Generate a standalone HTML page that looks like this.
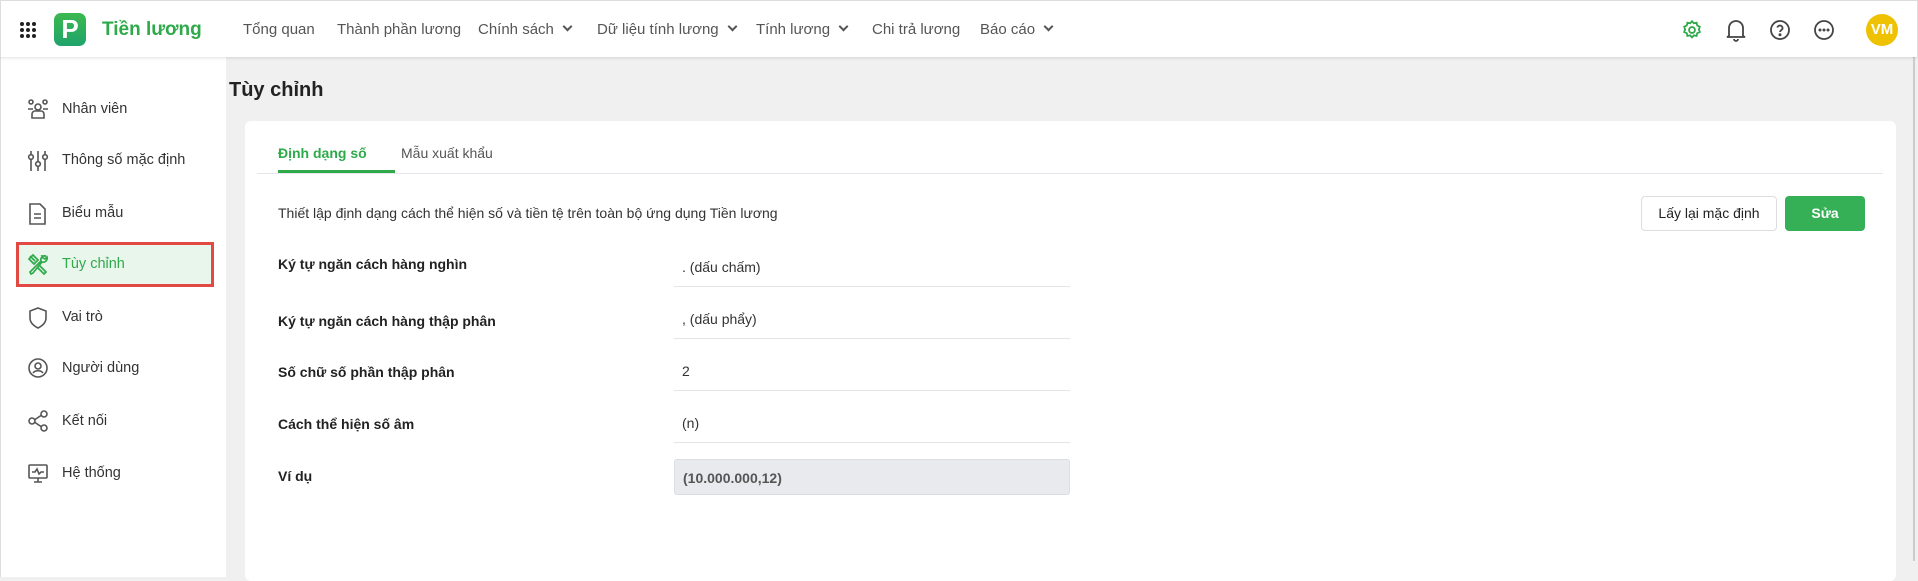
<!DOCTYPE html>
<html><head><meta charset="utf-8"><style>
*{box-sizing:border-box;margin:0;padding:0}
body{width:1918px;height:561px;overflow:hidden;background:#f0f0f0;font-family:"Liberation Sans",Arial,sans-serif;position:relative;color:#222}
.hdr{position:absolute;left:0;top:0;width:1918px;height:57px;background:#fff;box-shadow:0 1px 3px rgba(0,0,0,.12);border:1px solid #ddd;border-bottom:none;z-index:2}
.nav{position:absolute;top:20px;font-size:15px;color:#555}
.side{position:absolute;left:0;top:57px;width:226px;height:520px;background:#fff;border-left:1px solid #ddd}
.si{position:absolute;left:0;width:226px;height:30px;font-size:14.5px;color:#333}
.si span{position:absolute;left:61px;top:6px}
.si svg{position:absolute;left:26px;top:3px}
.card{position:absolute;left:245px;top:121px;width:1651px;height:460px;background:#fff;border-radius:6px}
.lbl{position:absolute;left:33px;font-size:14px;font-weight:bold;color:#222}
.val{position:absolute;left:429px;width:396px;height:40px;border-bottom:1px solid #e3e3e8;font-size:14px;color:#333;padding:12px 8px}
.chev{display:inline-block;width:7px;height:7px;border-right:2px solid #555;border-bottom:2px solid #555;transform:rotate(45deg);margin-left:10px;position:relative;top:-4px}
</style></head><body>
<div class="hdr">
  <svg style="position:absolute;left:19px;top:21px" width="16" height="16" viewBox="0 0 16 16" fill="#222"><circle cx="2" cy="2" r="2"/><circle cx="8" cy="2" r="2"/><circle cx="14" cy="2" r="2"/><circle cx="2" cy="8" r="2"/><circle cx="8" cy="8" r="2"/><circle cx="14" cy="8" r="2"/><circle cx="2" cy="14" r="2"/><circle cx="8" cy="14" r="2"/><circle cx="14" cy="14" r="2"/></svg>
  <div style="position:absolute;left:53px;top:12px;width:32px;height:33px;border-radius:7px;background:linear-gradient(#3cb94f,#1fa36b);color:#fff;font-weight:bold;font-size:26px;text-align:center;line-height:33px">P</div>
  <div style="position:absolute;left:101px;top:18px;font-size:19px;font-weight:bold;color:#2faa4a">Tiền lương</div>
  <div class="nav" style="left:242px">Tổng quan</div>
  <div class="nav" style="left:336px">Thành phần lương</div>
  <div class="nav" style="left:477px">Chính sách<i class="chev"></i></div>
  <div class="nav" style="left:596px">Dữ liệu tính lương<i class="chev"></i></div>
  <div class="nav" style="left:755px">Tính lương<i class="chev"></i></div>
  <div class="nav" style="left:871px">Chi trả lương</div>
  <div class="nav" style="left:979px">Báo cáo<i class="chev"></i></div>
  <svg style="position:absolute;left:1680px;top:18px" width="22" height="22" viewBox="0 0 24 24" fill="none" stroke="#2faa4a" stroke-width="2"><circle cx="12" cy="12" r="3.2"/><path d="M12 2.5l2 2.2 3-.6.7 3 2.8 1.3-1 2.9 1 2.9-2.8 1.3-.7 3-3-.6-2 2.2-2-2.2-3 .6-.7-3-2.8-1.3 1-2.9-1-2.9 2.8-1.3.7-3 3 .6z"/></svg>
  <svg style="position:absolute;left:1724px;top:17px" width="22" height="24" viewBox="0 0 22 24" fill="none" stroke="#444" stroke-width="1.8"><path d="M4 18V10a7 7 0 0114 0v8l2 1H2z"/><path d="M9 21a2 2 0 004 0"/></svg>
  <svg style="position:absolute;left:1768px;top:18px" width="22" height="22" viewBox="0 0 22 22" fill="none" stroke="#444" stroke-width="1.8"><circle cx="11" cy="11" r="9"/><path d="M8.3 8.5a2.7 2.7 0 015.3.7c0 1.8-2.6 2-2.6 3.8"/><circle cx="11" cy="15.8" r=".6" fill="#444"/></svg>
  <svg style="position:absolute;left:1812px;top:18px" width="22" height="22" viewBox="0 0 22 22" fill="none" stroke="#444" stroke-width="1.8"><circle cx="11" cy="11" r="9"/><circle cx="7" cy="11" r=".6" fill="#444"/><circle cx="11" cy="11" r=".6" fill="#444"/><circle cx="15" cy="11" r=".6" fill="#444"/></svg>
  <div style="position:absolute;left:1865px;top:13px;width:32px;height:32px;border-radius:50%;background:#eec200;color:#fff;font-weight:bold;font-size:15px;text-align:center;line-height:32px">VM</div>
</div>
<div class="side">
  <div class="si" style="top:38px"><svg width="22" height="22" viewBox="0 0 22 22" fill="none" stroke="#555" stroke-width="1.6"><circle cx="4" cy="4" r="2"/><circle cx="18" cy="4" r="2"/><circle cx="11" cy="9" r="3"/><path d="M1 11h5M16 11h5M5 20v-4a3 3 0 013-3h6a3 3 0 013 3v4z"/></svg><span>Nhân viên</span></div>
  <div class="si" style="top:89px"><svg width="22" height="24" viewBox="0 0 22 24" fill="none" stroke="#555" stroke-width="1.6"><path d="M4 2v20M11 2v20M18 2v20"/><circle cx="4" cy="8" r="2.3" fill="#fff"/><circle cx="11" cy="15" r="2.3" fill="#fff"/><circle cx="18" cy="8" r="2.3" fill="#fff"/></svg><span>Thông số mặc định</span></div>
  <div class="si" style="top:142px"><svg width="20" height="24" viewBox="0 0 20 24" fill="none" stroke="#555" stroke-width="1.6"><path d="M3 2h10l5 5v15H3z"/><path d="M7 12h7M7 16h7"/></svg><span>Biểu mẫu</span></div>
  <div style="position:absolute;left:15px;top:185px;width:198px;height:45px;background:#e9f6ec;border:3px solid #e04a43"></div>
  <div class="si" style="top:193px;color:#2faa4a"><svg width="22" height="22" viewBox="0 0 22 22" fill="none" stroke="#2faa4a" stroke-width="1.7"><path d="M3 3l5 5M2 6l4-4 5 5-4 4zM12 12l7 7-2 2-7-7"/><path d="M19 3a4 4 0 00-5 5L3 19l1 2 2-1L15 9a4 4 0 005-5l-2 2-2-1-1-2z"/></svg><span>Tùy chỉnh</span></div>
  <div class="si" style="top:246px"><svg width="22" height="24" viewBox="0 0 22 24" fill="none" stroke="#555" stroke-width="1.6"><path d="M11 2l8 3v7c0 5-4 8-8 10-4-2-8-5-8-10V5z"/></svg><span>Vai trò</span></div>
  <div class="si" style="top:297px"><svg width="22" height="22" viewBox="0 0 22 22" fill="none" stroke="#555" stroke-width="1.6"><circle cx="11" cy="11" r="9"/><circle cx="11" cy="9" r="3"/><path d="M6 16c2-3 8-3 10 0"/></svg><span>Người dùng</span></div>
  <div class="si" style="top:350px"><svg width="22" height="22" viewBox="0 0 22 22" fill="none" stroke="#555" stroke-width="1.6"><circle cx="5" cy="11" r="3"/><circle cx="17" cy="4" r="3"/><circle cx="17" cy="18" r="3"/><path d="M8 9.5l6-4M8 12.5l6 4"/></svg><span>Kết nối</span></div>
  <div class="si" style="top:402px"><svg width="22" height="22" viewBox="0 0 22 22" fill="none" stroke="#555" stroke-width="1.6"><rect x="2" y="3" width="18" height="13" rx="1"/><path d="M5 10h3l2-3 2 5 2-2h3M7 20h8M11 16v4"/></svg><span>Hệ thống</span></div>
</div>
<div style="position:absolute;left:229px;top:79px;font-size:20px;font-weight:bold;color:#222">Tùy chỉnh</div>
<div class="card">
  <div style="position:absolute;left:33px;top:24px;font-size:14px;font-weight:bold;color:#2faa4a">Định dạng số</div>
  <div style="position:absolute;left:33px;top:49px;width:117px;height:3px;background:#2faa4a"></div>
  <div style="position:absolute;left:156px;top:24px;font-size:14px;color:#555">Mẫu xuất khẩu</div>
  <div style="position:absolute;left:12px;top:52px;width:1626px;height:1px;background:#e6e6ec"></div>
  <div style="position:absolute;left:33px;top:84px;font-size:14px;color:#333">Thiết lập định dạng cách thể hiện số và tiền tệ trên toàn bộ ứng dụng Tiền lương</div>
  <div style="position:absolute;left:1396px;top:75px;width:136px;height:35px;border:1px solid #ddd;border-radius:4px;font-size:14px;text-align:center;line-height:33px;color:#222">Lấy lại mặc định</div>
  <div style="position:absolute;left:1540px;top:75px;width:80px;height:35px;border-radius:4px;background:#35b057;color:#fff;font-weight:bold;font-size:14px;text-align:center;line-height:35px">Sửa</div>
  <div class="lbl" style="top:135px">Ký tự ngăn cách hàng nghìn</div>
  <div class="val" style="top:126px">. (dấu chấm)</div>
  <div class="lbl" style="top:192px">Ký tự ngăn cách hàng thập phân</div>
  <div class="val" style="top:178px">, (dấu phẩy)</div>
  <div class="lbl" style="top:243px">Số chữ số phần thập phân</div>
  <div class="val" style="top:230px">2</div>
  <div class="lbl" style="top:295px">Cách thể hiện số âm</div>
  <div class="val" style="top:282px">(n)</div>
  <div class="lbl" style="top:347px">Ví dụ</div>
  <div style="position:absolute;left:429px;top:338px;width:396px;height:36px;background:#e9eaee;border:1px solid #dcdde2;border-radius:3px;font-size:14px;color:#555;font-weight:bold;padding:10px 8px">(10.000.000,12)</div>
</div>
<div style="position:absolute;left:1913px;top:0;width:2px;height:561px;background:#ccc"></div>
</body></html>
